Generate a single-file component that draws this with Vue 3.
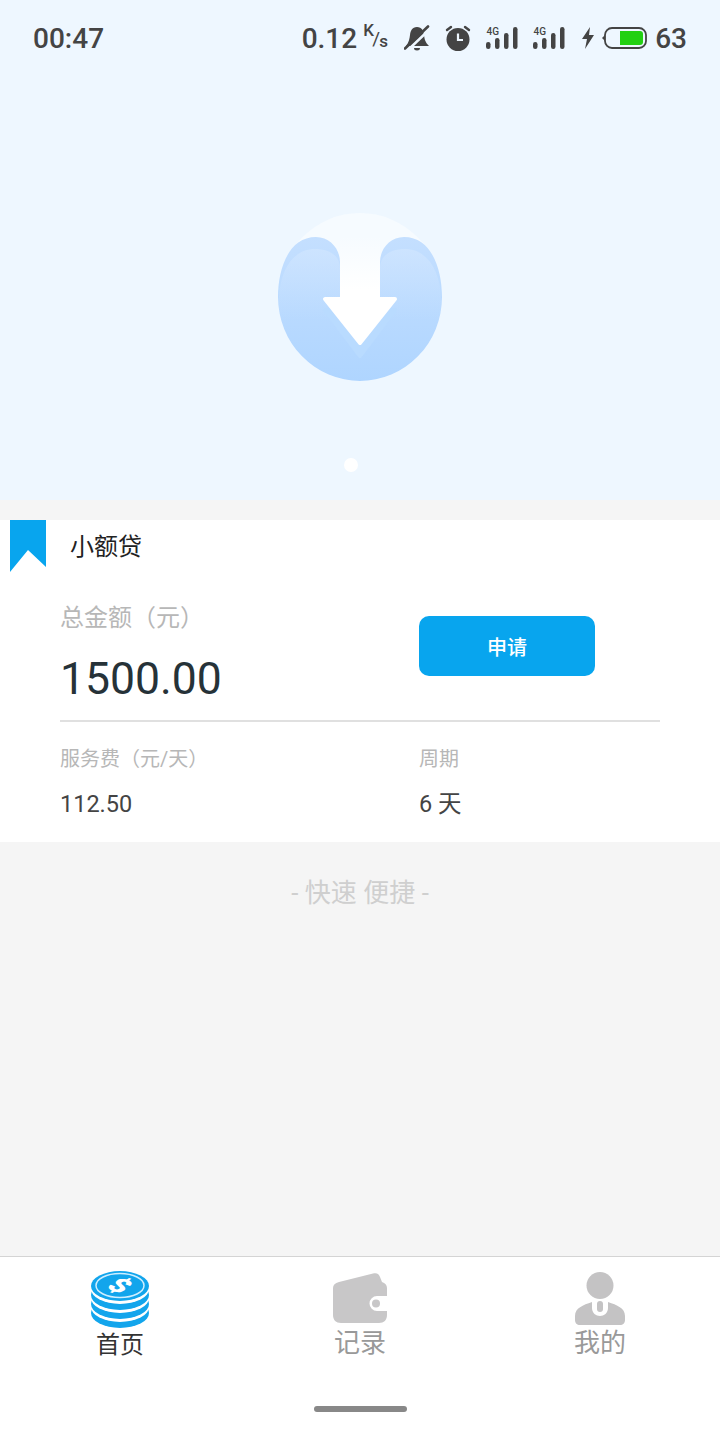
<script setup>
const tabs = [
  { key: 'home', label: '首页', active: true },
  { key: 'record', label: '记录', active: false },
  { key: 'mine', label: '我的', active: false },
]
</script>

<template>
  <div class="page">
    <div class="hero">
      <div class="status">
        <span class="time">00:47</span>
        <div class="status-right">
          <span class="speed">0.12</span>
          <span class="unit"><i class="k">K</i><i class="slash">/</i><i class="s">s</i></span>
          <svg class="st-bell" width="26" height="26" viewBox="0 0 26 26">
            <path d="M13 2 C8 2 6.500 6 6 10 C5.500 14 5 17 2 21 H25 C21 17 20.500 14 20 10 C19.500 6 18 2 13 2Z" fill="#444"/>
            <path d="M10 23 h6 a3 2.500 0 0 1 -6 0Z" fill="#444"/>
            <path d="M4 25 L26 4" stroke="#eef7ff" stroke-width="2.500"/>
            <path d="M1 23.500 L24 1.500" stroke="#444" stroke-width="2.600" stroke-linecap="round"/>
          </svg>
          <svg class="st-clock" width="26" height="26" viewBox="0 0 26 26">
            <circle cx="13" cy="14.500" r="11.500" fill="#444"/>
            <path d="M13 8.500 V15 H18" fill="none" stroke="#eef7ff" stroke-width="2.200"/>
            <path d="M2 5 L6 2 M24 5 L20 2" stroke="#444" stroke-width="2.400" stroke-linecap="round"/>
          </svg>
          <svg v-for="n in 2" :key="n" :class="n === 1 ? 'st-sig1' : 'st-sig2'" width="32" height="26" viewBox="0 0 32 26">
            <text x="0.500" y="10" font-size="10" font-weight="500" font-family="Roboto, sans-serif" fill="#444">4G</text>
            <rect x="0" y="17" width="4.500" height="7" rx="2.200" fill="#444"/>
            <rect x="9" y="13" width="4.500" height="11" rx="2.200" fill="#444"/>
            <rect x="18" y="8" width="4.500" height="16" rx="2.200" fill="#444"/>
            <rect x="27" y="2" width="4.500" height="22" rx="2.200" fill="#444"/>
          </svg>
          <svg class="st-bolt" width="14" height="22" viewBox="0 0 14 22">
            <path d="M9 0 L1 12 H6 L4 22 L13 8 H8 Z" fill="#444"/>
          </svg>
          <svg class="st-batt" width="45" height="22" viewBox="0 0 45 22">
            <rect x="3" y="1" width="41" height="20" rx="7" fill="none" stroke="#444" stroke-width="1.800"/>
            <path d="M0 11 L3 8 V14Z" fill="#444"/>
            <path d="M18 4 H38 a3 3 0 0 1 3 3 V15 a3 3 0 0 1 -3 3 H18Z" fill="#22d012"/>
          </svg>
          <span class="level">63</span>
        </div>
      </div>

      <svg class="hero-art" width="164" height="168" viewBox="278 213 164 168">
        <defs>
          <linearGradient id="blue" x1="0" y1="0" x2="0" y2="1">
            <stop offset="0" stop-color="#c4dfff"/>
            <stop offset="1" stop-color="#afd5ff"/>
          </linearGradient>
          <linearGradient id="glow" x1="0" y1="0" x2="0" y2="1">
            <stop offset="0" stop-color="#dcecff" stop-opacity="0.4"/>
            <stop offset="1" stop-color="#dcecff" stop-opacity="0"/>
          </linearGradient>
          <linearGradient id="shaft" x1="0" y1="0" x2="0" y2="1">
            <stop offset="0" stop-color="#f6fbff"/>
            <stop offset="0.500" stop-color="#ffffff"/>
          </linearGradient>
        </defs>
        <ellipse cx="360" cy="297" rx="82" ry="84" fill="#f6fbff"/>
        <path d="M278 297 C278 270 288 237 316 237 C330 237 340 249 340 262 V300 H380 V262 C380 249 390 237 404 237 C432 237 442 270 442 297 A82 84 0 0 1 278 297Z" fill="url(#blue)"/>
        <path d="M279 320 V297 C280 272 292 249 315 249 C330 249 340 256 340 268 V300 H380 V268 C380 256 390 249 405 249 C428 249 440 272 441 297 V320Z" fill="url(#glow)"/>
        <path d="M325 310 H395 L360 356Z" fill="#b9dbff" stroke="#b9dbff" stroke-width="4" stroke-linejoin="round"/>
        <path d="M340 237 H380 V297 H395 L360 343 L325 297 H340Z" fill="url(#shaft)"/>
        <path d="M325 299 H395 L360 343Z" fill="#fff" stroke="#fff" stroke-width="4" stroke-linejoin="round"/>
      </svg>
      <span class="dot"></span>
    </div>

    <div class="card">
      <svg class="ribbon" width="36" height="52" viewBox="0 0 36 52">
        <path d="M0 0 H36 V47 L18 30 L0 52Z" fill="#08a5ee"/>
      </svg>
      <div class="card-title">小额贷</div>
      <div class="amount-row">
        <div class="amount">
          <div class="amount-label">总金额（元）</div>
          <div class="amount-value">1500.00</div>
        </div>
        <button class="apply">申请</button>
      </div>
      <div class="divider"></div>
      <div class="info-row">
        <div class="info-col left">
          <div class="info-label">服务费（元/天）</div>
          <div class="info-value">112.50</div>
        </div>
        <div class="info-col">
          <div class="info-label">周期</div>
          <div class="info-value">6 天</div>
        </div>
      </div>
    </div>

    <div class="slogan">- 快速 便捷 -</div>

    <div class="tabbar">
      <div v-for="tab in tabs" :key="tab.key" class="tab" :class="[tab.key, { active: tab.active }]">
        <svg v-if="tab.key === 'home'" width="58" height="58" viewBox="0 0 58 58">
          <ellipse cx="29" cy="42" rx="29" ry="15" fill="#12a5ec"/>
          <ellipse cx="29" cy="36" rx="29" ry="15" fill="#fff"/>
          <ellipse cx="29" cy="33" rx="29" ry="15" fill="#12a5ec"/>
          <ellipse cx="29" cy="27" rx="29" ry="15" fill="#fff"/>
          <ellipse cx="29" cy="24" rx="29" ry="15" fill="#12a5ec"/>
          <ellipse cx="29" cy="18" rx="29" ry="15" fill="#fff"/>
          <ellipse cx="29" cy="15" rx="29" ry="15" fill="#12a5ec"/>
          <ellipse cx="29" cy="14.500" rx="24" ry="12" fill="none" stroke="#cfeeff" stroke-width="1.500"/>
          <text text-anchor="middle" y="10" font-size="29" font-weight="900" font-family="Roboto, sans-serif" fill="#fff" transform="translate(29 14.500) scale(1.200 0.650) rotate(35)">$</text>
        </svg>
        <svg v-else-if="tab.key === 'record'" width="54" height="50" viewBox="0 0 54 50">
          <path d="M6 9 L40 0.500 C44 -0.500 46 1 47 4 L49 9 C52 10 54 12 54 15 V23 H44 A7.500 7.500 0 0 0 44 38 H54 V42 C54 47 51 50 46 50 H8 C3 50 0 47 0 42 V15 C0 12 2 10 6 9Z" fill="#c8c7c8"/>
          <circle cx="43" cy="30.500" r="4" fill="#c8c7c8"/>
        </svg>
        <svg v-else width="50" height="53" viewBox="0 0 50 53">
          <circle cx="25" cy="13.500" r="13.500" fill="#c4c3c4"/>
          <path d="M0 48 V44 C0 36 8 33 17 30 V36 C17 41 21 44 25 44 C29 44 33 41 33 36 V30 C42 33 50 36 50 44 V48 C50 51 48 53 45 53 H5 C2 53 0 51 0 48Z" fill="#c4c3c4"/>
          <rect x="22" y="29" width="6" height="11" rx="3" fill="#c4c3c4"/>
        </svg>
        <span class="tab-label">{{ tab.label }}</span>
      </div>
    </div>
    <div class="home-bar"><span></span></div>
  </div>
</template>

<style>
html, body {
  margin: 0;
  background: #f5f5f5;
}
</style>

<style scoped>
.page {
  width: 720px;
  height: 1440px;
  display: flex;
  flex-direction: column;
  background: #f5f5f5;
  font-family: Roboto, "Noto Sans CJK SC", sans-serif;
  overflow: hidden;
}

.hero {
  position: relative;
  height: 500px;
  background: #eef7ff;
  display: flex;
  flex-direction: column;
  align-items: center;
}

.status {
  width: 100%;
  box-sizing: border-box;
  height: 76px;
  padding: 0 33px;
  display: flex;
  align-items: center;
  justify-content: space-between;
  color: #444;
  font-size: 28px;
  font-weight: 500;
}

.status-right {
  display: flex;
  align-items: center;
}

.status-right svg {
  display: block;
}

.speed {
  margin-right: 1px;
}

.unit {
  position: relative;
  width: 25px;
  height: 26px;
  margin-left: 5px;
  font-size: 17px;
}

.unit i {
  position: absolute;
  font-style: normal;
}

.k { left: 0; top: -5px; }
.slash { left: 9px; top: 2px; font-size: 19px; font-weight: 400; }
.s { left: 16px; top: 6px; }

.st-bell { margin-left: 16px; }
.st-clock { margin-left: 15px; }
.st-sig1 { margin-left: 15px; }
.st-sig2 { margin-left: 15px; }
.st-bolt { margin-left: 16px; }
.st-batt { margin-left: 7px; }
.level { margin-left: 8px; }

.hero-art {
  margin-top: 137px;
}

.dot {
  position: absolute;
  left: 344px;
  top: 458px;
  width: 14px;
  height: 14px;
  border-radius: 50%;
  background: #fff;
}

.card {
  position: relative;
  margin-top: 20px;
  height: 322px;
  background: #fff;
}

.ribbon {
  position: absolute;
  left: 10px;
  top: 0;
}

.card-title {
  padding: 11px 0 0 70px;
  height: 32px;
  line-height: 32px;
  font-size: 24px;
  color: #222;
}

.amount-row {
  display: flex;
  align-items: flex-start;
  padding: 0 0 0 60px;
  margin-top: 38px;
}

.amount {
  width: 359px;
}

.amount-label {
  font-size: 24px;
  line-height: 34px;
  color: #b7b7b7;
}

.amount-value {
  margin-top: 18px;
  font-size: 44.500px;
  line-height: 52px;
  color: #263238;
}

.apply {
  width: 176px;
  height: 60px;
  margin-top: 15px;
  border: none;
  border-radius: 10px;
  background: #08a5ee;
  color: #fff;
  font-family: inherit;
  font-size: 20px;
  font-weight: 500;
}

.divider {
  margin: 15px 60px 0;
  height: 2px;
  background: #e0e0e0;
}

.info-row {
  display: flex;
  padding: 21px 0 0 60px;
}

.info-col.left {
  width: 359px;
}

.info-label {
  font-size: 20px;
  line-height: 32px;
  color: #b7b7b7;
}

.info-value {
  margin-top: 13px;
  font-size: 23.500px;
  line-height: 32px;
  color: #444;
}

.slogan {
  margin-top: 33px;
  text-align: center;
  font-size: 26px;
  line-height: 36px;
  color: #cfcfcf;
}

.tabbar {
  margin-top: auto;
  height: 125px;
  box-sizing: border-box;
  border-top: 1px solid #d4d4d4;
  background: #fff;
  display: flex;
}

.tab {
  flex: 1;
  display: flex;
  flex-direction: column;
  align-items: center;
  padding-top: 14px;
  color: #999;
}

.tab svg {
  display: block;
  flex: none;
}

.tab.record {
  padding-top: 16px;
}

.tab.mine {
  padding-top: 15px;
}

.tab.active {
  color: #333;
}

.tab-label {
  font-size: 26px;
  line-height: 36px;
}

.tab.record .tab-label {
  margin-top: 2px;
}

.tab.active .tab-label {
  font-size: 24px;
  line-height: 32px;
}

.home-bar {
  height: 59px;
  background: #fff;
  display: flex;
  justify-content: center;
}

.home-bar span {
  margin-top: 25px;
  width: 93px;
  height: 6px;
  border-radius: 3px;
  background: #888;
}
</style>
